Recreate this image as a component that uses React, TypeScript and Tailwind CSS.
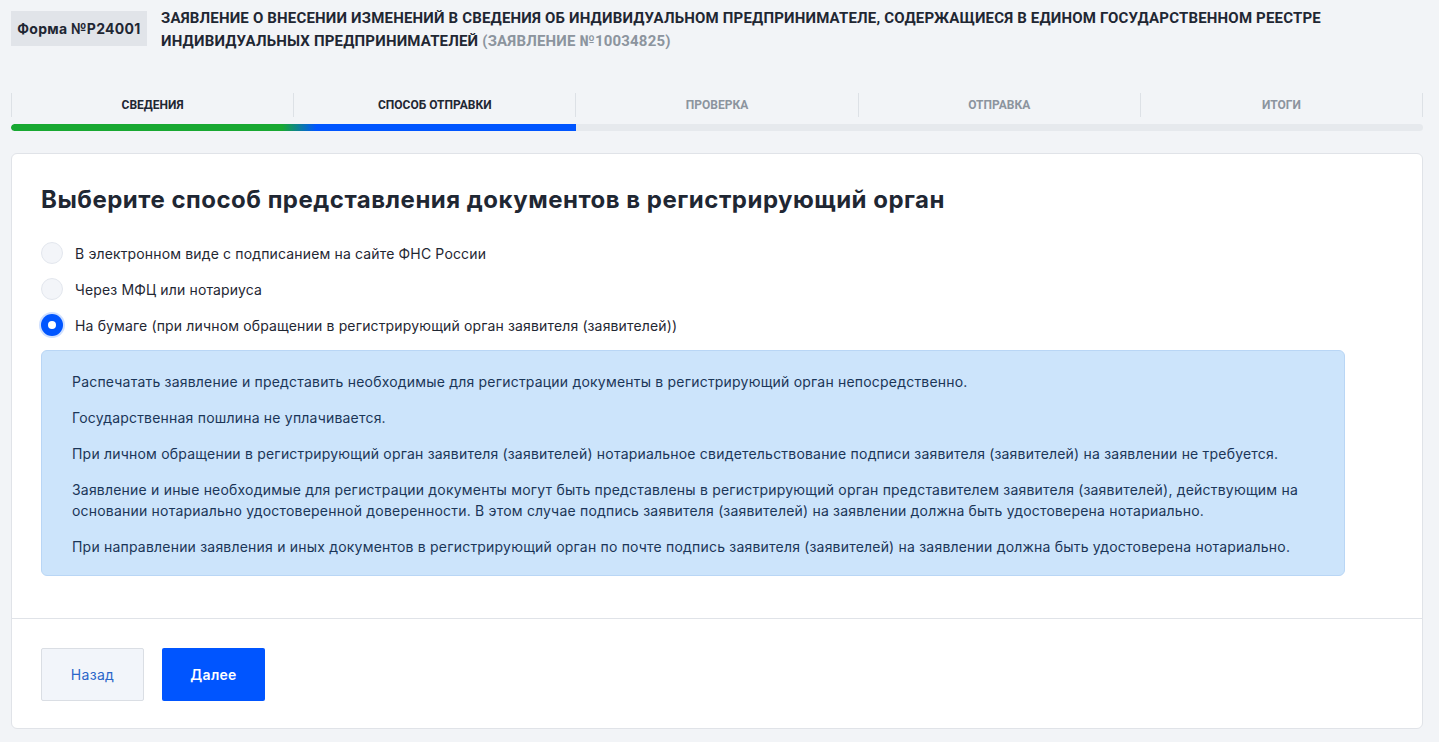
import React from "react";

const steps = [
  { label: "Сведения", active: true },
  { label: "Способ отправки", active: true },
  { label: "Проверка", active: false },
  { label: "Отправка", active: false },
  { label: "Итоги", active: false },
];

const options = [
  { label: "В электронном виде с подписанием на сайте ФНС России", checked: false },
  { label: "Через МФЦ или нотариуса", checked: false },
  { label: "На бумаге (при личном обращении в регистрирующий орган заявителя (заявителей))", checked: true },
];

const cond = { fontFamily: "Roboto, 'Noto Sans', sans-serif" };

export default function App() {
  return (
    <div
      className="min-h-[742px] bg-[#f2f4f7] pl-[11px] pr-[16px] pt-[7px] pb-[13px] text-[#1f2733]"
      style={{ fontFamily: "Inter, Roboto, 'Noto Sans', sans-serif" }}
    >
      {/* Header */}
      <div className="flex items-start gap-[14px]">
        <div className="mt-[4px] flex h-[35px] w-[136px] shrink-0 items-center justify-center bg-[#e1e4e9] text-[14px] font-bold tracking-[0.3px] text-[#1f2733]">
          Форма №Р24001
        </div>
        <div className="text-[15px] font-bold uppercase leading-[22.5px] tracking-[0.18px] text-[#1f2733]" style={cond}>
          Заявление о внесении изменений в сведения об индивидуальном предпринимателе, содержащиеся в едином государственном реестре
          <br />
          индивидуальных предпринимателей{" "}
          <span className="text-[#8c949e]">(Заявление №10034825)</span>
        </div>
      </div>

      {/* Steps */}
      <div className="mt-[41px]">
        <div className="grid grid-cols-5 border-l border-[#dde1e6]">
          {steps.map((s) => (
            <div
              key={s.label}
              style={cond}
              className={`flex h-[24px] items-center justify-center border-r border-[#dde1e6] text-[12px] font-bold uppercase ${
                s.active ? "text-[#1f2733]" : "text-[#8c949e]"
              }`}
            >
              {s.label}
            </div>
          ))}
        </div>
        <div className="mt-[7px] h-[7px] w-full overflow-hidden rounded-full bg-[#e6e9ed]">
          <div className="h-full w-[40%] rounded-l-full bg-[linear-gradient(90deg,#18a832_0%,#18a832_48%,#0055ff_54%,#0055ff_100%)]" />
        </div>
      </div>

      {/* Card */}
      <div className="mt-[22px] rounded-[6px] border border-[#e0e3e8] bg-white">
        <div className="px-[29px] pt-[30px] pb-[42px]">
          <h1 className="text-[24px] font-bold leading-[32px] tracking-[0.5px] text-[#1f2733]">
            Выберите способ представления документов в регистрирующий орган
          </h1>
          <div className="mt-[26px] flex flex-col gap-[14px]">
            {options.map((o) => (
              <label key={o.label} className="flex h-[22px] items-center gap-[12px]">
                {o.checked ? (
                  <span className="flex h-[22px] w-[22px] items-center justify-center rounded-full bg-[#0055ff] shadow-[0_0_0_2px_#cfe0ff]">
                    <span className="h-[8px] w-[8px] rounded-full bg-white" />
                  </span>
                ) : (
                  <span className="h-[22px] w-[22px] rounded-full border border-[#e3e7ee] bg-[#f3f5f9]" />
                )}
                <span className="text-[14px] tracking-[0.15px] text-[#1f2733]">{o.label}</span>
              </label>
            ))}
          </div>
          <div className="mt-[14px] mr-[48px] rounded-[6px] border border-[#b9d6f5] bg-[#cce4fb] px-[30px] pt-[20px] pb-[18px] text-[14px] leading-[21px] tracking-[0.2px] text-[#1b3658]">
            <p>Распечатать заявление и представить необходимые для регистрации документы в регистрирующий орган непосредственно.</p>
            <p className="mt-[15px]">Государственная пошлина не уплачивается.</p>
            <p className="mt-[15px]">При личном обращении в регистрирующий орган заявителя (заявителей) нотариальное свидетельствование подписи заявителя (заявителей) на заявлении не требуется.</p>
            <p className="mt-[15px]">
              Заявление и иные необходимые для регистрации документы могут быть представлены в регистрирующий орган представителем заявителя (заявителей), действующим на
              <br />
              основании нотариально удостоверенной доверенности. В этом случае подпись заявителя (заявителей) на заявлении должна быть удостоверена нотариально.
            </p>
            <p className="mt-[15px]">При направлении заявления и иных документов в регистрирующий орган по почте подпись заявителя (заявителей) на заявлении должна быть удостоверена нотариально.</p>
          </div>
        </div>
        <div className="flex gap-[18px] border-t border-[#e0e3e8] px-[29px] pt-[29px] pb-[27px]">
          <button className="flex h-[53px] w-[103px] items-center justify-center rounded-[2px] border border-[#dadee4] bg-[#f2f5fa] text-[14px] tracking-[0.3px] text-[#2a66c9]">
            Назад
          </button>
          <button className="flex h-[53px] w-[103px] items-center justify-center rounded-[2px] bg-[#0055ff] text-[14px] font-semibold tracking-[0.3px] text-white">
            Далее
          </button>
        </div>
      </div>
    </div>
  );
}
